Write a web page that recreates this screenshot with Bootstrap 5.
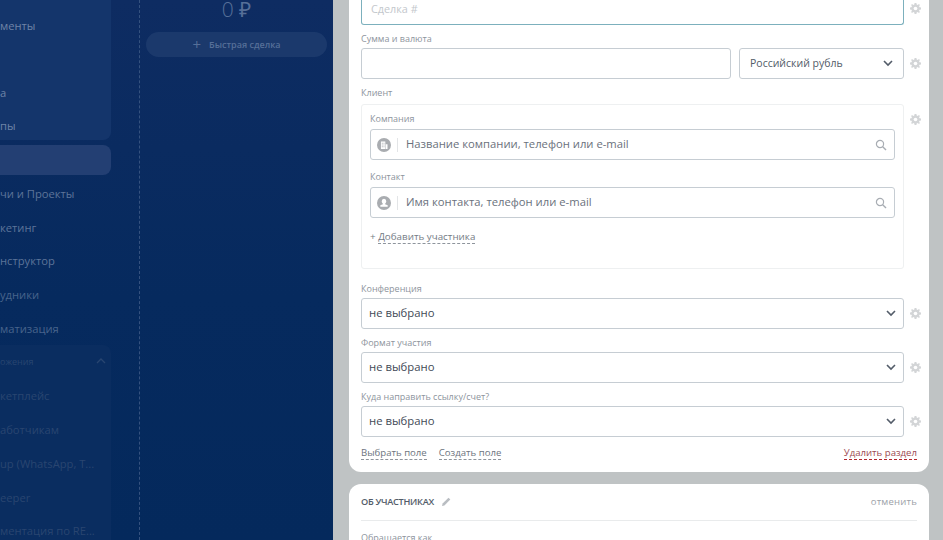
<!DOCTYPE html>
<html lang="ru">
<head>
    <meta charset="UTF-8">
    <title>Сделка</title>
    <link href="https://cdn.jsdelivr.net/npm/bootstrap@5.3.0/dist/css/bootstrap.min.css" rel="stylesheet">
    <style>
        html, body { height: 540px; margin: 0; overflow: hidden; }
        body { background: #bfc3c4; font-family: "Open Sans", sans-serif; font-size: 12px; color: #535c69; }
        .shell { height: 540px; }

        /* dark side */
        .side { width: 333px; flex: none; background: linear-gradient(180deg, #0e2c62 0%, #062a5e 55%, #04295c 100%); }
        .side-nav { width: 111px; }
        .nav-top { height: 140px; background: #14356b; border-radius: 0 0 8px 0; padding-top: 17px; }
        .nav-line { display: block; height: 33.7px; line-height: 18px; font-size: 11.2px; color: #6f84a7; white-space: nowrap; overflow: hidden; }
        .nav-top .nav-line:nth-child(2) { margin-top: 33px; }
        .nav-active { height: 30px; margin-top: 5px; background: #233f73; border-radius: 0 8px 8px 0; margin-bottom: 10px; }
        .nav-apps { margin-top: -8px; padding-top: 8px; background: #0a2d60; border-radius: 0 8px 0 0; height: 200px; }
        .nav-apps .nav-line { color: #294570; }
        .nav-mid { color: #5d7499 !important; }
        .nav-dim { color: #48648c !important; }
        .apps-head { height: 34px; padding-right: 5px; font-size: 9px; color: #284570; line-height: 18px; }
        .side-main { width: 188px; margin-left: 28px; border-left: 1px dashed #35527f; padding: 0 0 0 6px; }
        .sum-text { font-size: 21px; line-height: 19px; height: 32px; color: #566f98; font-weight: 300; text-align: center; }
        .quick-btn { width: 181px; height: 25px; background: #1b396c; border-radius: 13px; color: #566f98; font-size: 9px; font-weight: 600; }
        .quick-plus { font-size: 15px; line-height: 13px; font-weight: 400; }

        /* right side */
        .content { width: 580px; margin-left: 16px; }
        .panel-one { height: 472px; background: #fff; border-radius: 0 0 12px 12px; padding: 0 12px; }
        .panel-two { height: 60px; margin-top: 12px; background: #fff; border-radius: 12px 12px 0 0; padding: 0 12px; }

        .field-row { display: flex; align-items: center; gap: 5px; margin-top: 3px; }
        .field-first { margin-top: 0; }
        .field-main { width: 543px; flex: none; }
        .gear { width: 11px; height: 11px; flex: none; margin-left: 1px; display: block; }
        .gear-first { align-self: flex-start; margin-top: 3px; }
        .gear-box { margin-top: 10px; }
        .lbl { font-size: 9px; line-height: 12px; color: #8d949d; height: 12px; }
        .lbl-contact { margin-top: 11px; }
        .lbl-conf { margin-top: 14px; }
        .lbl-next { margin-top: 8px; }
        .inp { height: 31px; border: 1px solid #c6cdd3; border-radius: 3px; background: #fff; }
        .inp-first { height: 25px; border: 1px solid #7cb0bd; border-top: 0; border-radius: 0 0 3px 3px; padding-left: 9px; line-height: 17px; font-size: 10.800px; color: #c3c7cc; }
        .inp-sum { width: 370px; flex: none; }
        .inp-cur { width: 165px; flex: none; padding: 0 10px; font-size: 10.500px; color: #535c69; margin-left: 8px; }
        .inp-sel { padding: 0 7px 0 7px; font-size: 11.300px; color: #424956; }
        .chev { width: 10px; height: 7px; display: block; }

        .client-box { width: 543px; height: 165px; flex: none; border: 1px solid #eef0f1; border-radius: 3px; padding: 8px 8px 0 8px; }
        .client-row { display: flex; align-items: flex-start; gap: 5px; margin-top: 5px; }
        .inp-search { height: 31px; padding: 0 7px 0 6px; font-size: 11.250px; color: #6a717c; }
        .round-ico { width: 14px; height: 14px; display: block; flex: none; }
        .ico-sep { width: 1px; height: 14px; background: #e3e5e7; margin: 0 8px 0 6px; flex: none; }
        .search-ico { width: 12px; height: 12px; display: block; }
        .add-link { font-size: 9.800px; color: #747b85; line-height: 12px; margin-top: 13px; }
        .dash { border-bottom: 1px dashed #8e949c; }
        .foot-links { font-size: 9.600px; line-height: 12px; color: #6d747e; margin-top: 10px; }
        .foot-left { gap: 12px; }
        .dash-red { color: #9c4b52; border-bottom: 1px dashed #b3272f; }
        .head-two { height: 37px; border-bottom: 1px solid #e9ebec; }
        .head-title { font-size: 9.200px; letter-spacing: -.3px; font-weight: 600; color: #535c69; }
        .head-cancel { font-size: 9.500px; letter-spacing: .2px; color: #9ca1a8; }
        .pen { width: 9px; height: 9px; display: block; }
        .cut-lbl { font-size: 9px; color: #8d949d; line-height: 12px; margin-top: 11px; }
    </style>
</head>
<body>
    <svg width="0" height="0" class="d-block position-absolute">
        <symbol id="gear" viewBox="0 0 12 12">
            <path fill="#d3d5d7" d="M5 0h2l.3 1.6 1.1.5L9.800 1.200l1 1-.9 1.400.5 1.100L12 5v2l-1.600.3-.5 1.100.9 1.400-1 1-1.400-.9-1.100.5L7 12H5l-.3-1.600-1.100-.5-1.400.9-1-1 .9-1.400-.5-1.100L0 7V5l1.600-.3.5-1.100-.9-1.400 1-1 1.400.9 1.100-.5z"/>
            <circle cx="6" cy="6" r="2" fill="#fff"/>
        </symbol>
        <symbol id="chev" viewBox="0 0 10 7">
            <path d="M1 1l4 4 4-4" fill="none" stroke="#535c69" stroke-width="1.600"/>
        </symbol>
        <symbol id="lens" viewBox="0 0 12 12">
            <circle cx="5" cy="5" r="3.600" fill="none" stroke="#a8adb3" stroke-width="1.200"/>
            <path d="M7.700 7.700L11 11" stroke="#a8adb3" stroke-width="1.400"/>
        </symbol>
    </svg>

    <div class="shell d-flex">
        <div class="side d-flex overflow-hidden">
            <div class="side-nav flex-shrink-0">
                <div class="nav-top">
                    <span class="nav-line">менты</span>
                    <span class="nav-line">а</span>
                    <span class="nav-line">пы</span>
                </div>
                <div class="nav-active"></div>
                <span class="nav-line nav-mid">чи и Проекты</span>
                <span class="nav-line nav-mid">кетинг</span>
                <span class="nav-line nav-mid">нструктор</span>
                <span class="nav-line nav-dim">удники</span>
                <span class="nav-line nav-dim">матизация</span>
                <div class="nav-apps">
                    <div class="apps-head d-flex justify-content-between align-items-start">
                        <span>ожения</span>
                        <svg width="10" height="7" class="mt-1"><path d="M1 6l4-4 4 4" fill="none" stroke="#284570" stroke-width="1.300"/></svg>
                    </div>
                    <span class="nav-line">кетплейс</span>
                    <span class="nav-line">аботчикам</span>
                    <span class="nav-line">up (WhatsApp, T...</span>
                    <span class="nav-line">eeper</span>
                    <span class="nav-line">ментация по RE...</span>
                </div>
            </div>
            <div class="side-main flex-shrink-0">
                <div class="sum-text">0 ₽</div>
                <div class="quick-btn d-flex align-items-center justify-content-center gap-2">
                    <span class="quick-plus">+</span><span>Быстрая сделка</span>
                </div>
            </div>
        </div>

        <div class="content flex-shrink-0">
            <div class="panel-one d-flex flex-column">
                <div class="field-row field-first">
                    <div class="field-main inp-first">Сделка #</div>
                    <svg class="gear gear-first"><use href="#gear"/></svg>
                </div>
                <div class="lbl mt-2">Сумма и валюта</div>
                <div class="field-row">
                    <div class="field-main d-flex">
                        <div class="inp inp-sum"></div>
                        <div class="inp inp-cur d-flex align-items-center justify-content-between">
                            <span>Российский рубль</span>
                            <svg class="chev"><use href="#chev"/></svg>
                        </div>
                    </div>
                    <svg class="gear"><use href="#gear"/></svg>
                </div>
                <div class="lbl mt-2">Клиент</div>
                <div class="client-row">
                    <div class="client-box">
                        <div class="lbl">Компания</div>
                        <div class="inp inp-search d-flex align-items-center mt-1">
                            <svg class="round-ico" viewBox="0 0 16 16">
                                <circle cx="8" cy="8" r="8" fill="#a9acb0"/>
                                <path d="M4.500 4h5v8.500h-5zM10 7h2v5.500h-2z" fill="#fff"/>
                                <path d="M5.500 5.500h1v1h-1zM7.500 5.500h1v1h-1zM5.500 7.500h1v1h-1zM7.500 7.500h1v1h-1zM5.500 9.500h1v1h-1zM7.500 9.500h1v1h-1z" fill="#a9acb0"/>
                            </svg>
                            <span class="ico-sep"></span>
                            <span class="flex-grow-1">Название компании, телефон или e-mail</span>
                            <svg class="search-ico"><use href="#lens"/></svg>
                        </div>
                        <div class="lbl lbl-contact">Контакт</div>
                        <div class="inp inp-search d-flex align-items-center mt-1">
                            <svg class="round-ico" viewBox="0 0 16 16">
                                <circle cx="8" cy="8" r="8" fill="#a9acb0"/>
                                <path d="M8 3a2.600 2.900 0 0 1 2.600 2.900c0 1.100-.5 2.100-1.300 2.700v.8l2.900 1.300v1.600H3.800v-1.600l2.900-1.300v-.8C5.900 8 5.400 7 5.400 5.900A2.600 2.900 0 0 1 8 3z" fill="#fff"/>
                            </svg>
                            <span class="ico-sep"></span>
                            <span class="flex-grow-1">Имя контакта, телефон или e-mail</span>
                            <svg class="search-ico"><use href="#lens"/></svg>
                        </div>
                        <div class="add-link">+ <span class="dash">Добавить участника</span></div>
                    </div>
                    <svg class="gear gear-box"><use href="#gear"/></svg>
                </div>
                <div class="lbl lbl-conf">Конференция</div>
                <div class="field-row">
                    <div class="field-main inp inp-sel d-flex align-items-center justify-content-between">
                        <span>не выбрано</span><svg class="chev"><use href="#chev"/></svg>
                    </div>
                    <svg class="gear"><use href="#gear"/></svg>
                </div>
                <div class="lbl lbl-next">Формат участия</div>
                <div class="field-row">
                    <div class="field-main inp inp-sel d-flex align-items-center justify-content-between">
                        <span>не выбрано</span><svg class="chev"><use href="#chev"/></svg>
                    </div>
                    <svg class="gear"><use href="#gear"/></svg>
                </div>
                <div class="lbl lbl-next">Куда направить ссылку/счет?</div>
                <div class="field-row">
                    <div class="field-main inp inp-sel d-flex align-items-center justify-content-between">
                        <span>не выбрано</span><svg class="chev"><use href="#chev"/></svg>
                    </div>
                    <svg class="gear"><use href="#gear"/></svg>
                </div>
                <div class="foot-links d-flex justify-content-between">
                    <div class="d-flex foot-left"><span class="dash">Выбрать поле</span><span class="dash">Создать поле</span></div>
                    <span class="dash-red">Удалить раздел</span>
                </div>
            </div>
            <div class="panel-two">
                <div class="head-two d-flex align-items-center justify-content-between">
                    <div class="d-flex align-items-center gap-2">
                        <span class="head-title">ОБ УЧАСТНИКАХ</span>
                        <svg class="pen" viewBox="0 0 9 9"><path d="M0 9l.6-2.400L6.500.700l1.800 1.800L2.400 8.400z" fill="#b9bdc2"/></svg>
                    </div>
                    <span class="head-cancel">отменить</span>
                </div>
                <div class="cut-lbl">Обращается как</div>
            </div>
        </div>
    </div>

    <script src="https://cdn.jsdelivr.net/npm/bootstrap@5.3.0/dist/js/bootstrap.bundle.min.js"></script>
</body>
</html>
